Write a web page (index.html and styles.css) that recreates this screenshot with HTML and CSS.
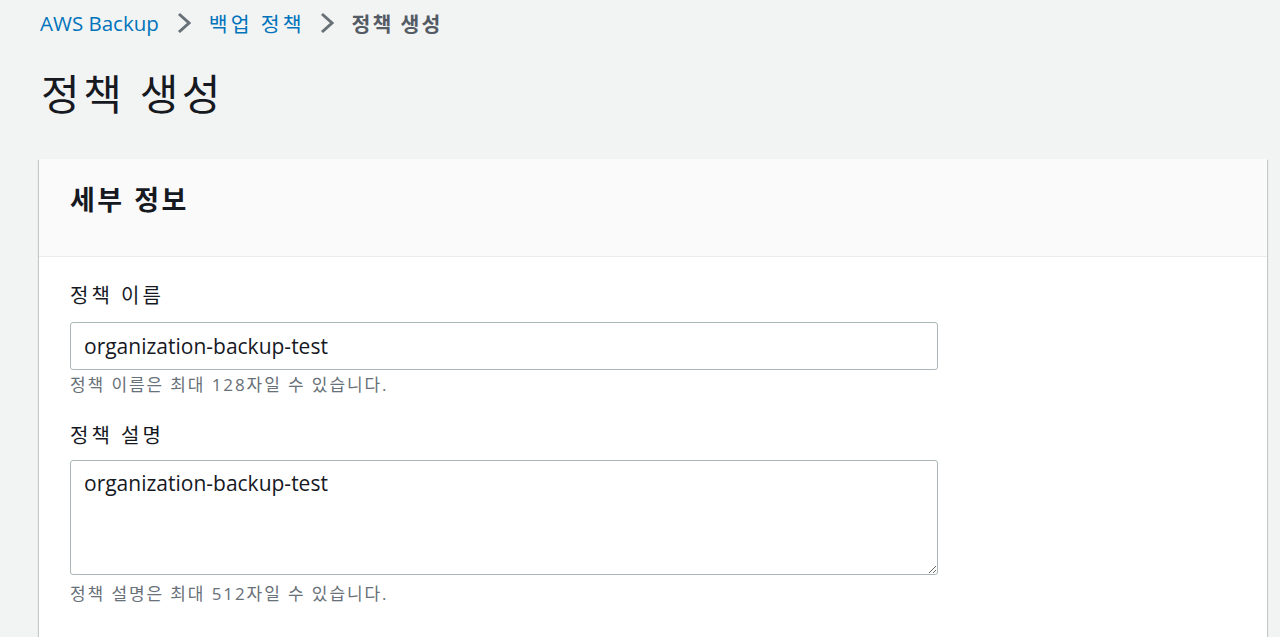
FILE: index.html
```html
<!DOCTYPE html>
<html lang="ko">
<head>
<meta charset="utf-8">
<title>정책 생성</title>
<link rel="stylesheet" href="styles.css">
</head>
<body>
<div class="page">
  <nav class="breadcrumbs">
    <a class="crumb-link" href="#">AWS Backup</a>
    <svg class="chev" width="14" height="22" viewBox="0 0 14 22"><path d="M2 2 L12 11 L2 20" fill="none" stroke="#687078" stroke-width="3" stroke-linejoin="miter"/></svg>
    <a class="crumb-link ko" href="#">백업 정책</a>
    <svg class="chev" width="14" height="22" viewBox="0 0 14 22"><path d="M2 2 L12 11 L2 20" fill="none" stroke="#687078" stroke-width="3" stroke-linejoin="miter"/></svg>
    <span class="crumb-current ko">정책 생성</span>
  </nav>
  <h1 class="title">정책 생성</h1>
  <section class="card">
    <header class="card-header"><h2 class="card-title">세부 정보</h2></header>
    <div class="card-body">
      <div class="field">
        <label class="label">정책 이름</label>
        <input class="input" type="text" value="organization-backup-test">
        <div class="hint">정책 이름은 최대 128자일 수 있습니다.</div>
      </div>
      <div class="field field-area">
        <label class="label">정책 설명</label>
        <textarea class="textarea">organization-backup-test</textarea>
        <div class="hint">정책 설명은 최대 512자일 수 있습니다.</div>
      </div>
    </div>
  </section>
</div>
</body>
</html>
```

FILE: styles.css
```css
* { box-sizing: border-box; }
html, body { margin: 0; padding: 0; background: #f2f3f3; }
body {
  font-family: "Open Sans", "Noto Sans CJK KR", sans-serif;
  color: #16191f;
  overflow: hidden;
  height: 637px;
}
.page { padding: 0 13px 0 39px; }
.breadcrumbs {
  display: flex;
  align-items: center;
  height: 46px;
  gap: 18px;
  padding-left: 1px;
  font-size: 20.5px;
}
.ko { letter-spacing: 3px; margin-right: -3px; }
.crumb-link { color: #0073bb; text-decoration: none; }
.crumb-current { color: #545b64; font-weight: 600; letter-spacing: 2px; }
.chev { display: block; }
.title {
  margin: 0;
  padding: 20px 0 0 2px;
  height: 113px;
  font-size: 42px;
  font-weight: 400;
  letter-spacing: 3.5px;
  line-height: 56px;
  color: #16191f;
}
.card {
  background: #fff;
  box-shadow: 0 1px 1px 0 rgba(0,28,36,.3), 1px 1px 1px 0 rgba(0,28,36,.15), -1px 1px 1px 0 rgba(0,28,36,.15);
}
.card-header {
  background: #fafafa;
  border-bottom: 1px solid #eaeded;
  height: 98px;
  padding: 21px 31px 0 31px;
}
.card-title {
  margin: 0;
  font-size: 27px;
  line-height: 40px;
  font-weight: 700;
  letter-spacing: 2.5px;
  color: #16191f;
}
.card-body { padding: 24px 31px 40px 31px; }
.field { display: flex; flex-direction: column; width: 868px; }
.field + .field { margin-top: 24px; }
.label {
  font-size: 20px;
  line-height: 30px;
  letter-spacing: 3px;
  color: #16191f;
  margin-bottom: 11px;
}
.field-area .label { margin-bottom: 9px; }
.input, .textarea {
  font-family: "Open Sans", "Noto Sans CJK KR", sans-serif;
  font-size: 21px;
  color: #16191f;
  border: 1px solid #aab7b8;
  border-radius: 3px;
  background: #fff;
  padding: 0 13px;
  width: 868px;
  outline: none;
  letter-spacing: 0;
}
.input { height: 48px; }
.textarea { height: 115px; padding-top: 8px; resize: vertical; line-height: 28px; }
.hint {
  font-size: 17px;
  line-height: 24px;
  letter-spacing: 1.9px;
  color: #687078;
  margin-top: 3px;
}
.field-area .hint { margin-top: 7px; }
```
